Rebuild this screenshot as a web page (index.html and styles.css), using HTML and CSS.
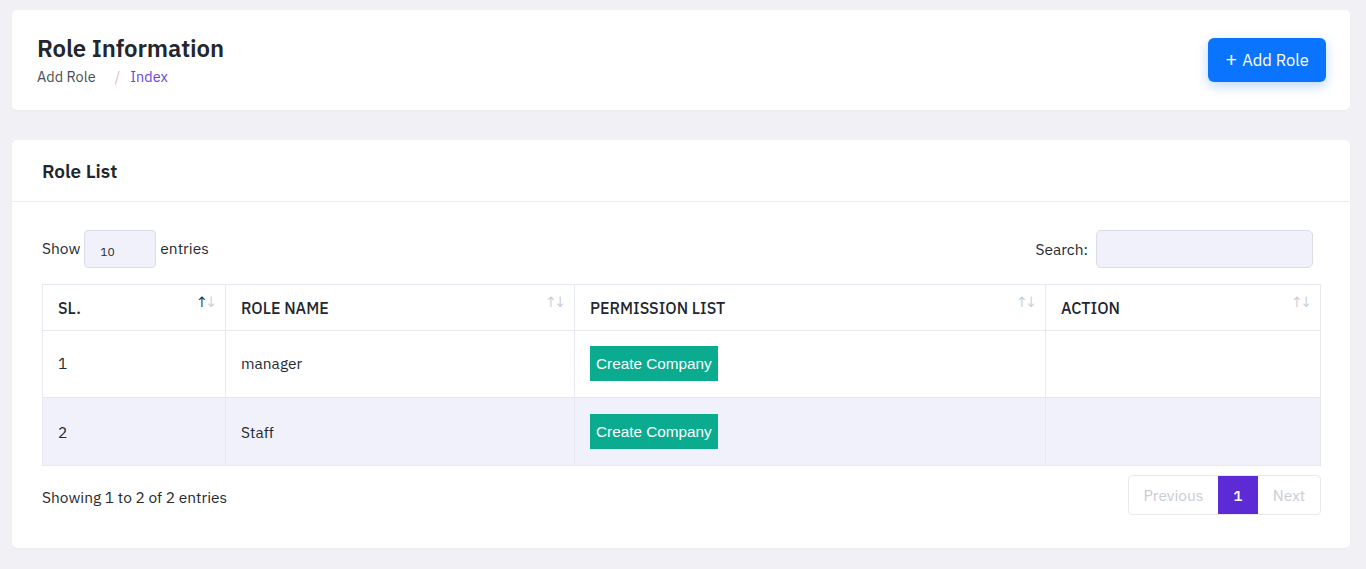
FILE: index.html
```html
<!DOCTYPE html>
<html>
<head>
<meta charset="utf-8">
<link rel="stylesheet" href="styles.css">
</head>
<body>
<div class="page">
  <div class="card head-card">
    <div class="head-left">
      <h1 class="title">Role Information</h1>
      <div class="crumbs"><span class="crumb">Add Role</span><span class="sep">/</span><span class="crumb active">Index</span></div>
    </div>
    <button class="add-btn"><span class="plus">+</span>Add Role</button>
  </div>

  <div class="card list-card">
    <div class="list-head">Role List</div>
    <div class="list-body">
      <div class="controls">
        <label class="show">Show <span class="select">10</span> entries</label>
        <label class="search">Search: <span class="search-input"></span></label>
      </div>
      <table class="tbl">
        <colgroup><col class="c1"><col class="c2"><col class="c3"><col class="c4"></colgroup>
        <thead>
          <tr>
            <th><span>SL.</span><span class="sort"><b class="on">↑</b><b>↓</b></span></th>
            <th><span>ROLE NAME</span><span class="sort"><b>↑</b><b>↓</b></span></th>
            <th><span>PERMISSION LIST</span><span class="sort"><b>↑</b><b>↓</b></span></th>
            <th><span>ACTION</span><span class="sort"><b>↑</b><b>↓</b></span></th>
          </tr>
        </thead>
        <tbody>
          <tr><td>1</td><td>manager</td><td><span class="perm">Create Company</span></td><td></td></tr>
          <tr class="odd"><td>2</td><td>Staff</td><td><span class="perm">Create Company</span></td><td></td></tr>
        </tbody>
      </table>
      <div class="footer">
        <div class="info">Showing 1 to 2 of 2 entries</div>
        <div class="pager"><span class="pg dis">Previous</span><span class="pg cur">1</span><span class="pg dis">Next</span></div>
      </div>
    </div>
  </div>
</div>
</body>
</html>
```
FILE: styles.css
```css
* { box-sizing: border-box; }
html, body { margin: 0; padding: 0; }
body {
  background: #f0f0f5;
  font-family: "IBM Plex Sans", Inter, "Noto Sans", sans-serif;
  color: #262b33;
}
.page { padding: 10px 16px 20px 12px; display: flex; flex-direction: column; gap: 30px; }
.card { background: #fff; border-radius: 5px; box-shadow: 0 1px 2px rgba(0,0,0,0.03); }
.head-card { height: 100px; display: flex; align-items: center; justify-content: space-between; padding: 0 24px 0 25px; }
.head-left { margin-top: -2px; }
.title { margin: 0; font-size: 24px; font-weight: 600; color: #23262d; line-height: 30px; letter-spacing: -0.1px; }
.crumbs { font-size: 14.5px; margin-top: 4px; color: #4a4f58; display: flex; }
.sep { color: #f1b2bd; margin: 0 10px 0 19px; }
.crumb.active { color: #6a45e0; }
.add-btn {
  border: 0; background: #0b74ff; color: #fff; font-family: inherit; font-size: 16.5px;
  height: 44px; width: 118px; border-radius: 6px; display: flex; align-items: center; justify-content: center; gap: 5px;
  box-shadow: 0 4px 12px rgba(11,116,255,0.28); margin-top: 0;
}
.plus { font-size: 20px; line-height: 1; margin-top: -3px; }
.list-card { height: 408px; }
.list-head { height: 62px; border-bottom: 1px solid #ebecf2; padding: 0 30px; display: flex; align-items: center; font-size: 19px; font-weight: 600; color: #23262d; }
.list-body { padding: 28px 29px 0 30px; }
.controls { display: flex; justify-content: space-between; align-items: center; height: 38px; font-size: 15.5px; }
.show { display: flex; align-items: center; gap: 4px; margin-top: -3px; }
.select { width: 72px; height: 38px; background: #f0f1fa; border: 1px solid #dcdde8; border-radius: 4px; font-size: 12px; display: flex; align-items: center; padding-left: 15px; padding-top: 4px; margin-top: 3px; }
.search { display: flex; align-items: center; gap: 8px; margin-right: 8px; }
.search-input { width: 217px; height: 38px; background: #f0f1fa; border: 1px solid #dcdde8; border-radius: 5px; }
.tbl { width: 100%; border-collapse: collapse; margin-top: 16px; font-size: 15.5px; table-layout: fixed; }
.c1 { width: 183px; } .c2 { width: 349px; } .c3 { width: 471px; } .c4 { width: auto; }
.tbl th, .tbl td { border: 1px solid #e8e9f0; text-align: left; padding: 0 15px; }
.tbl th { height: 46px; font-weight: 500; position: relative; font-size: 16px; color: #23262d; padding-top: 0; }
.tbl td { color: #262b33; }
.tbl tbody tr:first-child td { height: 67px; padding-bottom: 2px; }
.tbl tbody tr.odd td { height: 68px; background: #f0f1fa; }
.sort { position: absolute; right: 11px; top: 7px; font-size: 15px; color: #c8cbd3; display: flex; letter-spacing: -3px; }
.sort b { font-weight: 400; }
.sort b.on { color: #2a2a2a; }
.perm { display: inline-block; background: #0aab8f; color: #fff; font-family: "Liberation Sans", Arial, sans-serif; font-size: 15.3px; height: 35px; line-height: 35px; padding: 0 6px; vertical-align: middle; }
.footer { display: flex; justify-content: space-between; align-items: center; margin-top: 10px; }
.info { font-size: 15.5px; margin-top: 3px; }
.pager { display: flex; border: 1px solid #e9eaf0; border-radius: 4px; height: 40px; overflow: hidden; margin-top: -1px; }
.pg { display: flex; align-items: center; justify-content: center; font-size: 15.5px; }
.pg.dis { color: #c9ccd3; }
.pg:first-child { width: 89px; }
.pg.cur { width: 40px; background: #5c2bd5; color: #fff; font-weight: 500; }
.pg:last-child { width: 62px; }
```
